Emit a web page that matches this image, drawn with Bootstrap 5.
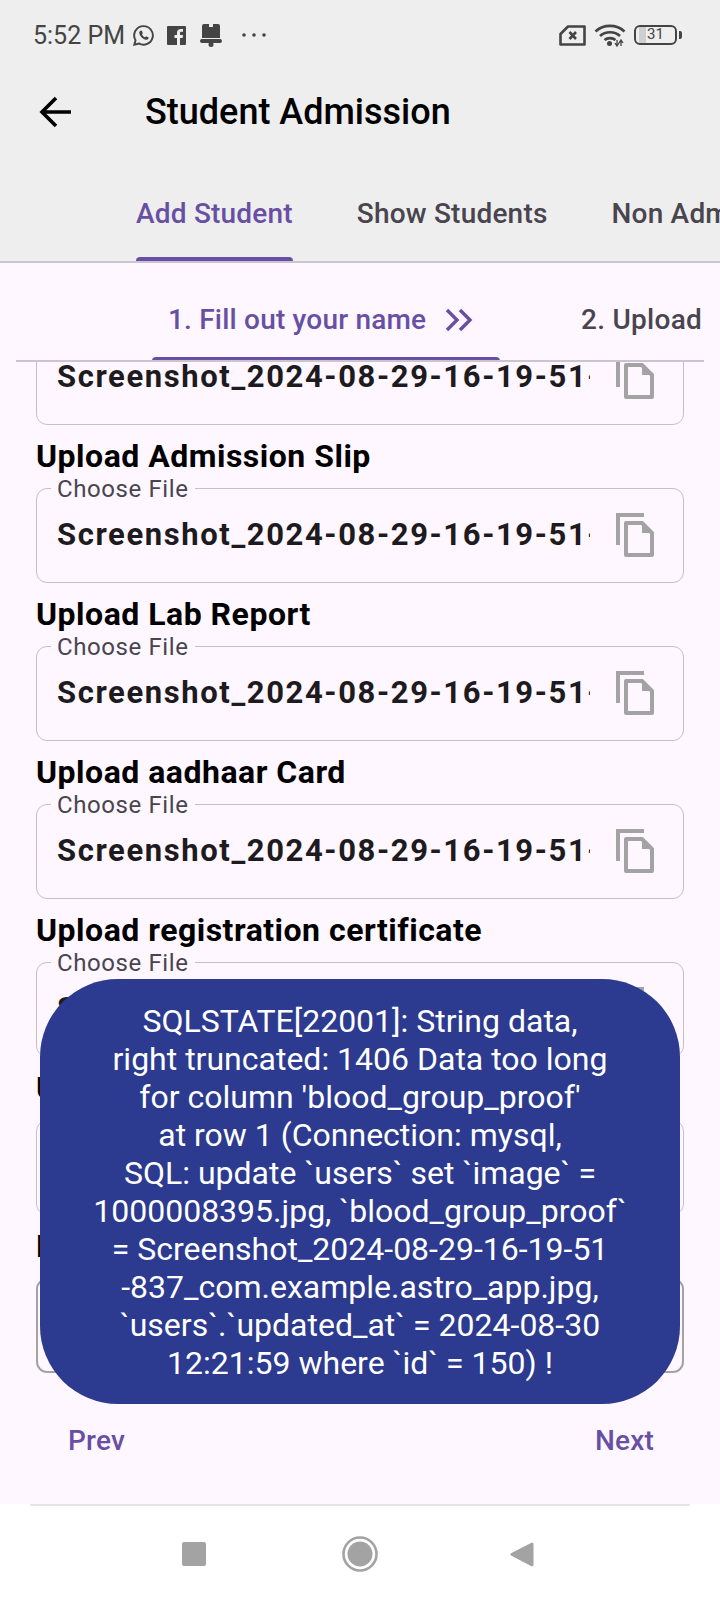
<!DOCTYPE html>
<html lang="en">
<head>
    <meta charset="UTF-8">
    <title>Student Admission</title>
    <link href="https://cdn.jsdelivr.net/npm/bootstrap@5.3.3/dist/css/bootstrap.min.css" rel="stylesheet">
    <style>
        html, body { width: 720px; height: 1600px; overflow: hidden; }
        body { font-family: Roboto, "Liberation Sans", sans-serif; background: #fef7ff; position: relative; }

        .app-head { background: #eeeeee; flex: none; }
        .status-row { height: 70px; padding: 0 38px 0 33px; color: #444; }
        .clock { font-size: 25px; line-height: 1; margin-right: 7px; }
        .status-row svg { display: block; flex: none; }
        .ico-fb { margin-left: 12px; }
        .ico-bell { margin-left: 14px; }
        .ico-dots { margin-left: 20px; }
        .batt { width: 43px; height: 20px; border: 2.5px solid #444; border-radius: 6px; font-size: 15px; line-height: 15px;
                background: linear-gradient(90deg, transparent 3px, #cfcfcf 3px, #cfcfcf 10px, transparent 10px); text-align: center; }
        .batt-tip { width: 3px; height: 8px; background: #444; border-radius: 0 2px 2px 0; margin-left: 2px; }

        .tool-row { height: 82px; padding: 1px 0 0 39px; }
        .page-name { font-size: 36px; font-weight: 500; line-height: 40px; color: #000; margin: 0 0 0 74px; }

        .top-tabs { height: 111px; padding-left: 136px; gap: 64px; border-bottom: 2px solid #cac4d0; overflow: hidden; flex-wrap: nowrap; }
        .top-tab { padding-top: 45px; color: #49454f; font-size: 28px; letter-spacing: .2px; font-weight: 500; line-height: 34px; white-space: nowrap; }
        .tab-on { color: #6750a4; }
        .tab-bar { display: block; height: 6px; background: #6750a4; border-radius: 4px 4px 0 0; }
        .top-tab .tab-bar { margin-top: 26px; }

        .form-area { min-height: 0; }
        .step-tabs { height: 99px; margin: 0 16px; border-bottom: 2px solid #cac4d0; flex: none; position: relative; z-index: 1; }
        .step-tab { width: 348px; margin-left: 136px; padding-top: 40px; font-size: 28px; letter-spacing: .2px; font-weight: 500; line-height: 34px; color: #6750a4; white-space: nowrap; flex: none; }
        .step-tab .tab-bar { margin-top: 20px; }
        .step-txt { padding-left: 16px; gap: 18px; }
        .step-next { margin-left: 81px; padding-top: 40px; font-size: 28px; letter-spacing: .28px; font-weight: 500; line-height: 34px; color: #49454f; white-space: nowrap; }

        .field-scroll { overflow: hidden; height: 1011px; padding: 0 36px; flex: none; }
        .field-scroll .up-field:first-child { margin-top: -32px; }
        .up-label { font-size: 32px; letter-spacing: .5px; font-weight: 700; line-height: 36px; color: #000; margin: 13px 0 14px; display: block; white-space: nowrap; }
        .up-box { height: 95px; border: 1.5px solid #c4c0c9; border-radius: 11px; position: relative; padding: 0 29px 2px 20px; }
        .up-box.is-last { border: 2px solid #a3a3a3; }
        .up-legend { position: absolute; left: 14px; top: -13px; padding: 0 6px; background: #fef7ff; font-size: 24px; line-height: 27px; letter-spacing: .6px; color: #49454f; }
        .up-name { width: 533px; overflow: hidden; white-space: nowrap; font-size: 31px; font-weight: 700; letter-spacing: 1.6px; color: #1d1b20; line-height: 36px; }
        .up-box svg { flex: none; margin-left: 26px; margin-top: 1px; }

        .pager { height: 131px; padding: 51px 66px 0 68px; flex: none; }
        .pager .btn { padding: 0; border: 0; font-size: 28px; letter-spacing: .2px; font-weight: 500; line-height: 34px; color: #6750a4; text-decoration: none; }

        .sys-nav { background: #fff; height: 96px; flex: none; }
        .sys-rule { height: 2px; margin: 0 30px; background: #e6e4e8; }
        .sys-btns { padding: 30px 0 0 182px; }
        .sys-circle { margin: 0 132px 0 136px; }

        .err-toast { position: absolute; left: 40px; top: 979px; width: 640px; height: 425px; background: #2c3a90; color: #fff; border-radius: 78px;
                     font-size: 32px; line-height: 38px; text-align: center; white-space: nowrap; z-index: 5; }
    </style>
</head>
<body class="d-flex flex-column">

<header class="app-head">
    <div class="status-row d-flex align-items-center">
        <span class="clock">5:52 PM</span>
        <svg width="23" height="23" viewBox="0 0 24 24"><path d="M12 2.2a9.7 9.7 0 0 0-8.3 14.7L2.4 21.6l4.8-1.3A9.7 9.7 0 1 0 12 2.2z" fill="none" stroke="#444" stroke-width="2"/><path d="M8.6 7c-.7.5-1.1 1.4-1 2.3.3 3.1 3.9 6.7 7.1 7.2 1 .1 1.9-.3 2.4-1.1l.2-1.4-2.5-1.2-1 1.1c-1.5-.5-2.8-1.9-3.4-3.3l.9-1-1-2.6z" fill="#444"/></svg>
        <svg class="ico-fb" width="19" height="19" viewBox="0 0 19 19"><path d="M0 1a1 1 0 0 1 1-1h17a1 1 0 0 1 1 1v17a1 1 0 0 1-1 1h-5v-7h2.600l.4-3h-3V7.200c0-.9.3-1.400 1.400-1.400H16V3.100c-.3 0-1.200-.1-2.200-.1-2.300 0-3.800 1.300-3.800 3.800V9H7.500v3H10v7H1a1 1 0 0 1-1-1z" fill="#444"/></svg>
        <svg class="ico-bell" width="22" height="23" viewBox="0 0 22 23"><path d="M2 2a2 2 0 0 1 2-2h5v3h4V0h5a2 2 0 0 1 2 2v12H2z" fill="#444"/><rect y="15" width="22" height="4" rx="2" fill="#444"/><circle cx="11" cy="20.500" r="2.500" fill="#444"/></svg>
        <svg class="ico-dots" width="24" height="4" viewBox="0 0 24 4"><circle cx="2" cy="2" r="1.800" fill="#444"/><circle cx="12" cy="2" r="1.800" fill="#444"/><circle cx="22" cy="2" r="1.800" fill="#444"/></svg>
        <svg class="ms-auto" width="27" height="21" viewBox="0 0 27 21"><path d="M9 1.500h16.500v18H1.500V9z" fill="none" stroke="#444" stroke-width="2.600" stroke-linejoin="round"/><path d="M10.500 7l6.500 7m0-7l-6.500 7" stroke="#444" stroke-width="2.600"/></svg>
        <svg class="ms-2" width="32" height="24" viewBox="0 0 32 24"><path d="M1.500 8.500c8-7.500 21-7.500 29 0M6 13c5.500-5 14.500-5 20 0M10.500 17c3-2.500 8-2.500 11 0" fill="none" stroke="#444" stroke-width="2.700"/><circle cx="15.500" cy="20.500" r="2.500" fill="#444"/><path d="M23 23v-6m-2 3l2 3 2-3M27 17v6m-2-3l2-3 2 3" fill="none" stroke="#444" stroke-width="1.300"/></svg>
        <div class="batt ms-2"><span>31</span></div>
        <span class="batt-tip"></span>
    </div>

    <div class="tool-row d-flex align-items-center">
        <svg width="32" height="32" viewBox="0 0 32 32"><path d="M32 16H3M17 2L3 16l14 14" fill="none" stroke="#000" stroke-width="3.600"/></svg>
        <h1 class="page-name">Student Admission</h1>
    </div>

    <nav class="nav top-tabs">
        <a class="top-tab tab-on text-decoration-none">Add Student<span class="tab-bar"></span></a>
        <a class="top-tab text-decoration-none">Show Students</a>
        <a class="top-tab text-decoration-none">Non Admission Students</a>
    </nav>
</header>

<main class="form-area flex-grow-1 d-flex flex-column">
    <div class="step-tabs d-flex overflow-hidden">
        <div class="step-tab">
            <div class="step-txt d-flex align-items-center">
                <span>1. Fill out your name</span>
                <svg width="30" height="26" viewBox="0 0 30 26"><path d="M3 3l10 10L3 23M16 3l10 10-10 10" fill="none" stroke="#6750a4" stroke-width="3.400"/></svg>
            </div>
            <span class="tab-bar"></span>
        </div>
        <div class="step-next">2. Upload</div>
    </div>

    <div class="field-scroll">
        <div class="up-field">
            <div class="up-box d-flex align-items-center">
                <span class="up-name">Screenshot_2024-08-29-16-19-51-837_com.example.astro_app.jpg</span>
                <svg width="38" height="44" viewBox="0 0 38 44"><use href="#copy-ico"/></svg>
            </div>
        </div>
        <div class="up-field">
            <label class="up-label">Upload Admission Slip</label>
            <div class="up-box d-flex align-items-center">
                <span class="up-legend">Choose File</span>
                <span class="up-name">Screenshot_2024-08-29-16-19-51-837_com.example.astro_app.jpg</span>
                <svg width="38" height="44" viewBox="0 0 38 44"><use href="#copy-ico"/></svg>
            </div>
        </div>
        <div class="up-field">
            <label class="up-label">Upload Lab Report</label>
            <div class="up-box d-flex align-items-center">
                <span class="up-legend">Choose File</span>
                <span class="up-name">Screenshot_2024-08-29-16-19-51-837_com.example.astro_app.jpg</span>
                <svg width="38" height="44" viewBox="0 0 38 44"><use href="#copy-ico"/></svg>
            </div>
        </div>
        <div class="up-field">
            <label class="up-label">Upload aadhaar Card</label>
            <div class="up-box d-flex align-items-center">
                <span class="up-legend">Choose File</span>
                <span class="up-name">Screenshot_2024-08-29-16-19-51-837_com.example.astro_app.jpg</span>
                <svg width="38" height="44" viewBox="0 0 38 44"><use href="#copy-ico"/></svg>
            </div>
        </div>
        <div class="up-field">
            <label class="up-label">Upload registration certificate</label>
            <div class="up-box d-flex align-items-center">
                <span class="up-legend">Choose File</span>
                <span class="up-name">Screenshot_2024-08-29-16-19-51-837_com.example.astro_app.jpg</span>
                <svg width="38" height="44" viewBox="0 0 38 44"><use href="#copy-ico"/></svg>
            </div>
        </div>
        <div class="up-field">
            <label class="up-label">Upload Photo</label>
            <div class="up-box d-flex align-items-center">
                <span class="up-legend">Choose File</span>
                <span class="up-name">1000008395.jpg</span>
            </div>
        </div>
        <div class="up-field">
            <label class="up-label">Blood Group Proof</label>
            <div class="up-box is-last d-flex align-items-center">
                <span class="up-name">Screenshot_2024-08-29-16-19-51-837_com.example.astro_app.jpg</span>
            </div>
        </div>
    </div>

    <div class="pager d-flex justify-content-between align-items-start">
        <button type="button" class="btn btn-link">Prev</button>
        <button type="button" class="btn btn-link">Next</button>
    </div>
</main>

<footer class="sys-nav">
    <div class="sys-rule"></div>
    <div class="sys-btns d-flex align-items-center">
        <svg width="24" height="24" viewBox="0 0 24 24"><rect width="24" height="24" rx="2" fill="#a3a3a3"/></svg>
        <svg class="sys-circle" width="36" height="36" viewBox="0 0 36 36"><circle cx="18" cy="18" r="16.500" fill="none" stroke="#a3a3a3" stroke-width="2.600"/><circle cx="18" cy="18" r="12.500" fill="#a3a3a3"/></svg>
        <svg width="24" height="27" viewBox="0 0 24 27"><path d="M22 1.500a1.500 1.500 0 0 1 1.500 1.500v21a1.500 1.500 0 0 1-2.500 1L1 14.500a1.500 1.500 0 0 1 0-2.200L21 2z" fill="#a3a3a3"/></svg>
    </div>
</footer>

<div class="err-toast d-flex align-items-center justify-content-center">
    <div>SQLSTATE[22001]: String data,<br>
    right truncated: 1406 Data too long<br>
    for column 'blood_group_proof'<br>
    at row 1 (Connection: mysql,<br>
    SQL: update `users` set `image` =<br>
    1000008395.jpg, `blood_group_proof`<br>
    = Screenshot_2024-08-29-16-19-51<br>
    -837_com.example.astro_app.jpg,<br>
    `users`.`updated_at` = 2024-08-30<br>
    12:21:59 where `id` = 150) !</div>
</div>

<svg width="0" height="0" class="d-block position-absolute">
    <defs>
        <g id="copy-ico">
            <path d="M2 32V2H28" fill="none" stroke="#a3a3a3" stroke-width="4"/>
            <path d="M10 10H26L36 20V42H10Z" fill="none" stroke="#a3a3a3" stroke-width="4" stroke-linejoin="round"/>
            <path d="M26 8L38 20H26Z" fill="#a3a3a3"/>
        </g>
    </defs>
</svg>

<script src="https://cdn.jsdelivr.net/npm/bootstrap@5.3.3/dist/js/bootstrap.bundle.min.js"></script>
</body>
</html>
